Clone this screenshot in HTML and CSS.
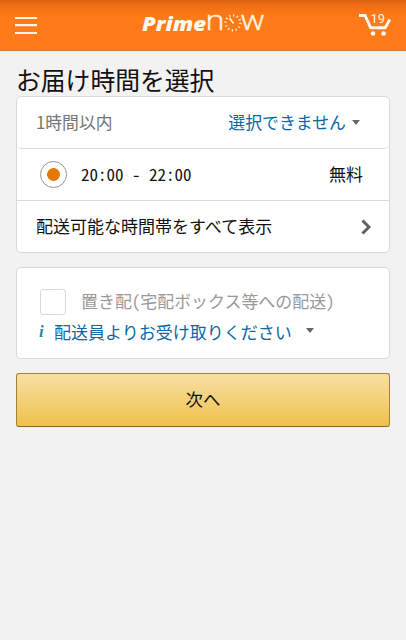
FILE: index.html
```html
<!DOCTYPE html>
<html lang="ja">
<head>
<meta charset="utf-8">
<title>Prime Now</title>
<link rel="stylesheet" href="styles.css">
</head>
<body>
<header class="bar">
  <svg class="menu" width="22" height="19" viewBox="0 0 22 19"><path d="M0 2H22M0 9.2H22M0 17H22"/></svg>
  <svg class="logo" width="128" height="48" viewBox="0 -10 128 48">
    <text class="prime" x="2" y="20.5" textLength="64" lengthAdjust="spacingAndGlyphs">Prime</text>
    <text class="now" x="65.5" y="20" textLength="19" lengthAdjust="spacingAndGlyphs">n</text>
    <circle class="ticks" cx="93" cy="12.8" r="7.4" pathLength="36"/>
    <path class="hand" d="M89.5 8L93.5 13.5"/>
    <text class="now" x="101" y="20" textLength="23" lengthAdjust="spacingAndGlyphs">w</text>
  </svg>
  <svg class="cart" width="34" height="26" viewBox="0 0 34 26">
    <path d="M1 5.5H7L12.7 17.8H27.2L31.8 9.5"/>
    <circle cx="15" cy="23.5" r="2.3"/><circle cx="25.6" cy="23.5" r="2.3"/>
    <text x="12.5" y="12.8" textLength="14.5" lengthAdjust="spacingAndGlyphs">19</text>
  </svg>
</header>
<main>
  <h1>お届け時間を選択</h1>
  <section class="card slots">
    <div class="row first"><span class="muted">1時間以内</span><a class="link">選択できません<i class="caret"></i></a></div>
    <div class="row choice"><span class="radio"></span><span class="time">20:00 - 22:00</span><span class="fee">無料</span></div>
    <div class="row last"><span>配送可能な時間帯をすべて表示</span><svg class="chevron" width="10" height="16" viewBox="0 0 10 16"><path d="M1.5 1.5L8 8L1.5 14.5"/></svg></div>
  </section>
  <section class="card drop">
    <div class="option"><span class="box"></span><span class="label">置き配<span class="half">(</span>宅配ボックス等への配送<span class="half">)</span></span></div>
    <div class="note"><span class="info">i</span><a>配送員よりお受け取りください</a><i class="caret"></i></div>
  </section>
  <button class="next">次へ</button>
</main>
</body>
</html>
```
FILE: styles.css
```css
* { box-sizing: border-box; }
body {
  margin: 0;
  min-height: 640px;
  background: #f2f2f2;
  color: #111;
  font: 17px/24px "Noto Sans CJK JP", sans-serif;
}
.bar {
  height: 51px;
  padding: 0 14px 0 15px;
  display: flex;
  align-items: flex-start;
  justify-content: space-between;
  background: linear-gradient(#d9600f 0, #ee6d14 5px, #fc7716 13px, #ff7a18 20px);
  border-bottom: 1px solid #d97a3c;
}
.menu { margin-top: 16px; }
.menu path { stroke: #fff3df; stroke-width: 2.2; }
.logo { margin: 0 0 0 13px; }
.prime { font: italic 800 20px "Open Sans", sans-serif; fill: #fffaf0; }
.now { font: 300 27px "Open Sans", sans-serif; fill: #fff3df; stroke: #fff3df; stroke-width: .5; }
.ticks { fill: none; stroke: #ffe9cc; stroke-width: 2.4; stroke-dasharray: 1 2; }
.hand { stroke: #fff3df; stroke-width: 1.6; }
.cart { margin-top: 10px; }
.cart path { fill: none; stroke: #fff8ec; stroke-width: 2.9; }
.cart circle { fill: #fff8ec; }
.cart text { font: 13.5px Roboto, sans-serif; fill: #fff8ec; }
main { padding: 12px 16px 0; }
h1 { margin: 0; height: 33px; font-size: 24.8px; line-height: 32px; font-weight: 400; white-space: nowrap; }
.card { background: #fff; border: 1px solid #d9d9d9; border-radius: 5px; }
.row { height: 52px; padding: 0 19px 1px; display: flex; align-items: center; justify-content: space-between; border-bottom: 1px solid #d9d9d9; }
.first { padding-right: 29px; border-radius: 0 0 5px 5px; }
.last { height: 51px; border-bottom: 0; padding-right: 18px; }
.muted { color: #757575; font-size: 16.8px; }
.link, .note a { color: #0b66a5; }
.link { display: flex; align-items: center; font-size: 16.9px; }
.caret { width: 0; height: 0; margin-left: 6px; border: 4px solid transparent; border-top: 5px solid #666; border-bottom: 0; }
.choice { padding: 0 26px 1px 23px; }
.radio { width: 27px; height: 27px; border: 1px solid #8d9696; border-radius: 50%; background: radial-gradient(circle, #e37a08 6px, #fff 6.8px); }
.time { margin: 0 auto 0 14px; font-feature-settings: "hwid"; white-space: pre; }
.chevron { margin-top: 1px; }
.chevron path { fill: none; stroke: #606060; stroke-width: 3; }
.drop { height: 92px; margin-top: 14px; padding: 20px 23px 0; }
.option { display: flex; align-items: center; height: 28px; }
.box { width: 26px; height: 26px; border: 1px solid #d8d8d8; border-radius: 3px; }
.label { margin: -2px 0 0 15px; color: #999; font-size: 16.95px; white-space: nowrap; }
.half { font-feature-settings: "hwid"; }
.note { display: flex; align-items: center; height: 31px; margin-left: -1px; white-space: nowrap; }
.info { width: 15px; color: #2f86a6; font: italic bold 17px "Liberation Serif", serif; }
.note .caret { margin: -3px 0 0 14px; }
.next {
  display: block;
  width: 100%;
  height: 54px;
  margin-top: 14px;
  padding: 0 0 3px;
  border: 1px solid #a08338;
  border-bottom-color: #846a29;
  border-radius: 3px;
  background: linear-gradient(#f7dfa5, #f0c14b);
  color: #111;
  font: 17.5px "Noto Sans CJK JP", sans-serif;
}
```
